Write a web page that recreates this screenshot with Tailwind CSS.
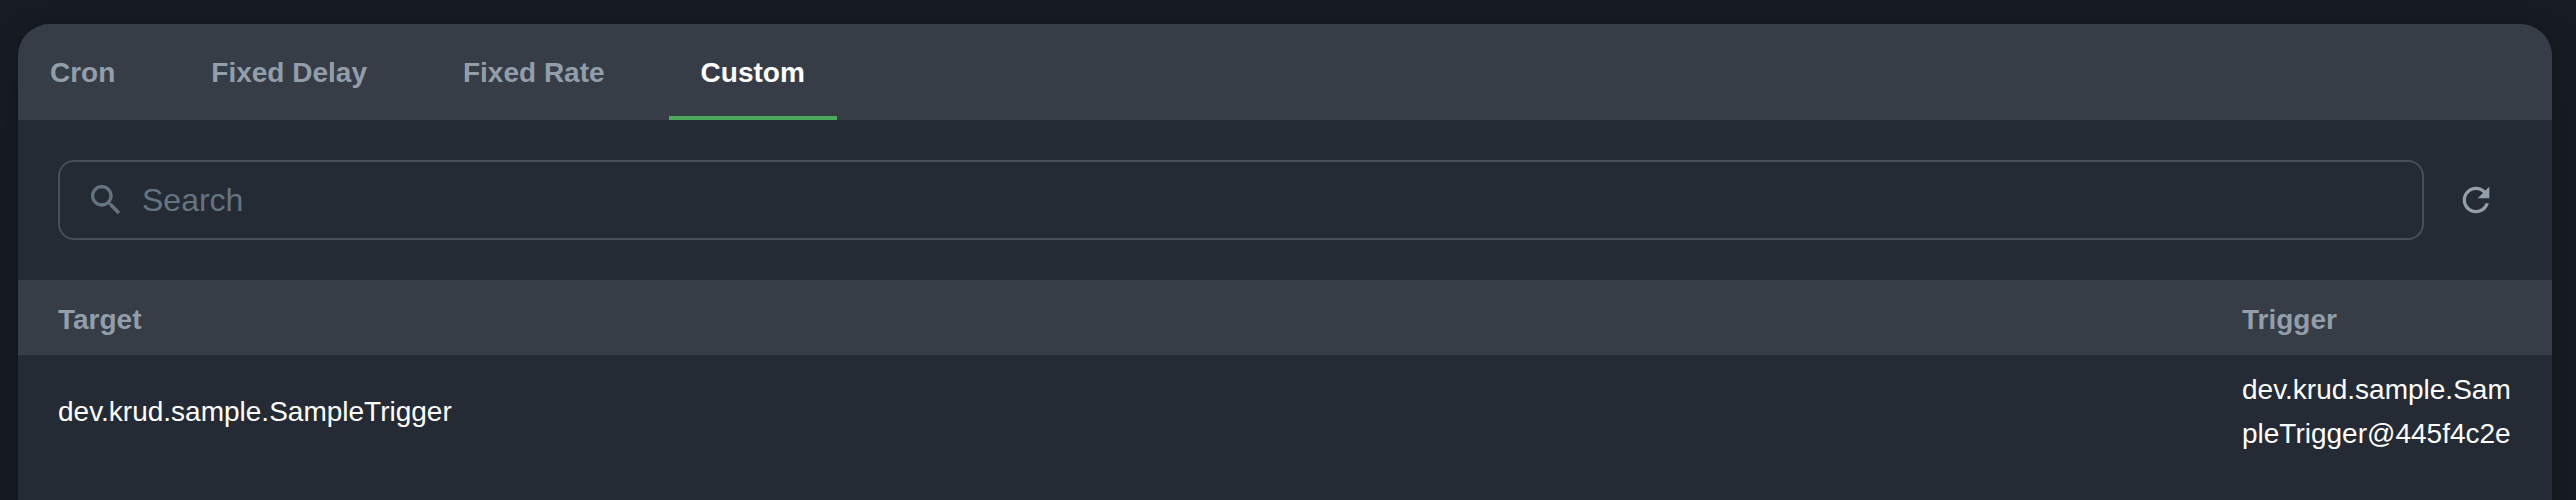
<!DOCTYPE html>
<html lang="en">
<head>
<meta charset="utf-8">
<title>Scheduled tasks</title>
<script src="https://cdn.jsdelivr.net/npm/@tailwindcss/browser@4"></script>
</head>
<body class="bg-[#171c23]">
<div class="h-[500px] overflow-hidden bg-[#171c23] pt-6 pr-6 pl-[18px] font-['Liberation_Sans',Arial,sans-serif] text-[28px] leading-[44px] text-white">
<main class="h-[560px] overflow-hidden rounded-[32px] bg-[#242b34] shadow-[0_0_4px_rgba(0,0,0,0.2),0_32px_64px_-8px_rgba(0,0,0,0.2)]">
  <nav class="flex h-24 gap-8 bg-[#363d46] font-bold text-[#939eab]">
    <button class="border-b-4 border-transparent px-8 pt-1.5">Cron</button>
    <button class="border-b-4 border-transparent px-8 pt-1.5">Fixed Delay</button>
    <button class="border-b-4 border-transparent px-8 pt-1.5">Fixed Rate</button>
    <button class="border-b-4 border-[#4caa5b] px-8 pt-1.5 text-white">Custom</button>
  </nav>
  <div class="flex items-center gap-4 p-10">
    <label class="flex h-20 flex-1 items-center gap-4 rounded-2xl border-2 border-[#484e5a] px-[26px]">
      <svg class="size-10 fill-[#667482]" viewBox="0 0 24 24"><path d="M15.5 14h-.79l-.28-.27C15.41 12.59 16 11.11 16 9.5 16 5.91 13.09 3 9.5 3S3 5.91 3 9.5 5.91 16 9.5 16c1.61 0 3.09-.59 4.23-1.57l.27.28v.79l5 4.99L20.49 19l-4.99-5zm-6 0C7.01 14 5 11.99 5 9.5S7.01 5 9.5 5 14 7.01 14 9.5 11.99 14 9.5 14z"/></svg>
      <input class="h-12 flex-1 bg-transparent text-[32px] outline-none placeholder:text-[#667482]" placeholder="Search">
    </label>
    <button class="p-4" aria-label="Refresh">
      <svg class="size-10 fill-[#939eab]" viewBox="0 0 24 24"><path d="M17.65 6.35C16.2 4.9 14.21 4 12 4c-4.42 0-7.99 3.58-7.99 8s3.57 8 7.99 8c3.73 0 6.84-2.55 7.73-6h-2.08c-.82 2.33-3.04 4-5.65 4-3.31 0-6-2.69-6-6s2.69-6 6-6c1.66 0 3.14.69 4.22 1.78L13 11h7V4l-2.35 2.35z"/></svg>
    </button>
  </div>
  <div class="grid h-[75px] grid-cols-[1fr_270px] items-center gap-10 bg-[#363d46] px-10 pt-1 font-bold text-[#939eab]">
    <div>Target</div>
    <div>Trigger</div>
  </div>
  <div class="grid grid-cols-[1fr_270px] items-center gap-10 px-10 pt-[13px]">
    <div>dev.krud.sample.SampleTrigger</div>
    <div class="break-all">dev.krud.sample.SampleTrigger@445f4c2e</div>
  </div>
</main>
</div>
</body>
</html>
